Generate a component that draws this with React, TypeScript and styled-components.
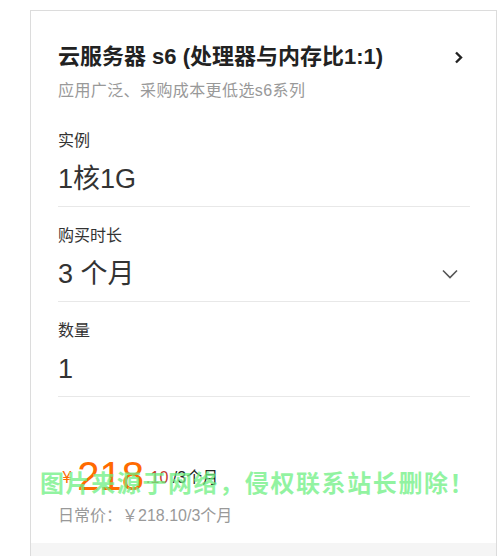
import { createGlobalStyle, styled } from "styled-components";

const GlobalStyle = createGlobalStyle`
  html, body {
    margin: 0;
    padding: 0;
    background: #fff;
    font-family: "Liberation Sans", Arial, "Noto Sans CJK SC", sans-serif;
    color: #333;
  }
`;

const Page = styled.div`
  padding: 10px 3px 0 30px;
  height: 556px;
  box-sizing: border-box;
  overflow: hidden;
`;

const Card = styled.div`
  position: relative;
  border: 1px solid #dcdcdc;
  border-bottom: none;
  background: #fff;
  display: flex;
  flex-direction: column;
  height: 100%;
  box-sizing: border-box;
`;

const Body = styled.div`
  padding: 31px 26px 0 27px;
  flex: 1;
`;

const Header = styled.div`
  display: flex;
  align-items: center;
  justify-content: space-between;
  padding-right: 7px;
`;

const Title = styled.div`
  font-size: 22px;
  line-height: 30px;
  font-weight: 700;
  color: #222;
`;

const Subtitle = styled.div`
  margin-top: 8px;
  font-size: 16px;
  line-height: 22px;
  color: #999;
  letter-spacing: 0.4px;
`;

const Field = styled.div<{ $first?: boolean }>`
  padding: ${p => (p.$first ? "28px" : "18px")} 0 9px;
  border-bottom: 1px solid #e8e8e8;
`;

const Label = styled.div`
  font-size: 16px;
  line-height: 22px;
  color: #333;
`;

const ValueRow = styled.div`
  margin-top: 9px;
  display: flex;
  align-items: center;
  justify-content: space-between;
  padding-right: 12px;
`;

const Value = styled.div`
  font-size: 27px;
  line-height: 36px;
  color: #333;
`;

const PriceBlock = styled.div`
  position: relative;
  padding-top: 59px;
`;

const PriceRow = styled.div`
  display: flex;
  align-items: flex-end;
  height: 40px;
`;

const Small = styled.span<{ $color: string }>`
  font-size: 16px;
  line-height: 16px;
  margin-bottom: 10px;
  color: ${p => p.$color};
  white-space: pre;
`;

const Big = styled.span`
  font-size: 40px;
  line-height: 40px;
  color: #ff6a00;
  margin: 0 2px 0 6px;
`;

const Regular = styled.div`
  margin-top: 10px;
  font-size: 16px;
  line-height: 20px;
  color: #999;
`;

const Watermark = styled.div`
  position: absolute;
  left: -18px;
  top: 73px;
  font-size: 24px;
  line-height: 28px;
  font-weight: 700;
  letter-spacing: 1.6px;
  white-space: nowrap;
  color: rgba(110, 240, 130, 0.75);
  pointer-events: none;
`;

const Footer = styled.div`
  height: 13px;
  background: #f5f5f5;
`;

function ChevronRight() {
  return (
    <svg width="9" height="13" viewBox="0 0 9 13">
      <path d="M2 1.5 L7 6.5 L2 11.5" fill="none" stroke="#222" strokeWidth="2.4" />
    </svg>
  );
}

function ChevronDown() {
  return (
    <svg width="16" height="10" viewBox="0 0 16 10">
      <path d="M1 1.5 L8 8.5 L15 1.5" fill="none" stroke="#555" strokeWidth="1.6" />
    </svg>
  );
}

const fields = [
  { label: "实例", value: "1核1G" },
  { label: "购买时长", value: "3 个月", select: true },
  { label: "数量", value: "1" },
];

export default function App() {
  return (
    <>
      <GlobalStyle />
      <Page>
        <Card>
          <Body>
            <Header>
              <Title>云服务器 s6 (处理器与内存比1:1)</Title>
              <ChevronRight />
            </Header>
            <Subtitle>应用广泛、采购成本更低选s6系列</Subtitle>

            {fields.map((f, i) => (
              <Field key={f.label} $first={i === 0}>
                <Label>{f.label}</Label>
                <ValueRow>
                  <Value>{f.value}</Value>
                  {f.select && <ChevronDown />}
                </ValueRow>
              </Field>
            ))}

            <PriceBlock>
              <PriceRow>
                <Small $color="#ff6a00"> ¥</Small>
                <Big>218</Big>
                <Small $color="#c0392b">.10 </Small>
                <Small $color="#222">/3个月</Small>
              </PriceRow>
              <Regular>日常价：￥218.10/3个月</Regular>
              <Watermark>图片来源于网络，侵权联系站长删除！</Watermark>
            </PriceBlock>
          </Body>
          <Footer />
        </Card>
      </Page>
    </>
  );
}
